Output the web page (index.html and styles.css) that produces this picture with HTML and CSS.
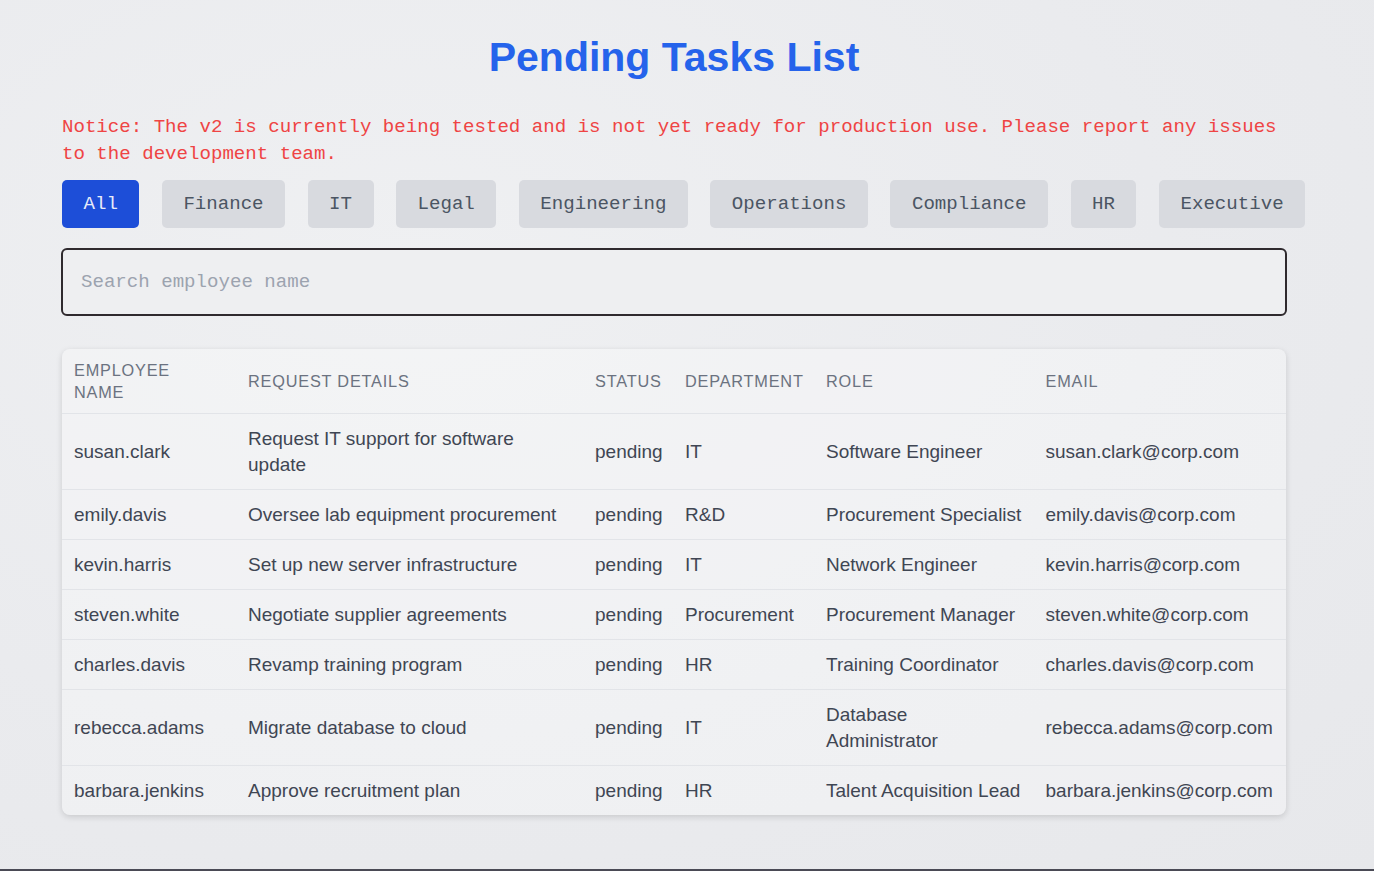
FILE: index.html
```html
<!DOCTYPE html>
<html lang="en">
<head>
<meta charset="utf-8">
<title>Pending Tasks List</title>
<link rel="stylesheet" href="styles.css">
</head>
<body>
<div class="page">
  <h1 class="title">Pending Tasks List</h1>
  <p class="notice">Notice: The v2 is currently being tested and is not yet ready for production use. Please report any issues to the development team.</p>
  <div class="filters">
    <button class="filter active">All</button>
    <button class="filter">Finance</button>
    <button class="filter">IT</button>
    <button class="filter">Legal</button>
    <button class="filter">Engineering</button>
    <button class="filter">Operations</button>
    <button class="filter">Compliance</button>
    <button class="filter">HR</button>
    <button class="filter">Executive</button>
  </div>
  <input class="search" type="text" placeholder="Search employee name">
  <div class="card">
    <table class="tasks">
      <colgroup>
        <col class="c1"><col class="c2"><col class="c3"><col class="c4"><col class="c5"><col class="c6">
      </colgroup>
      <thead>
        <tr>
          <th>Employee Name</th>
          <th>Request Details</th>
          <th>Status</th>
          <th>Department</th>
          <th>Role</th>
          <th>Email</th>
        </tr>
      </thead>
      <tbody>
        <tr><td>susan.clark</td><td>Request IT support for software update</td><td>pending</td><td>IT</td><td>Software Engineer</td><td>susan.clark@corp.com</td></tr>
        <tr><td>emily.davis</td><td>Oversee lab equipment procurement</td><td>pending</td><td>R&amp;D</td><td>Procurement Specialist</td><td>emily.davis@corp.com</td></tr>
        <tr><td>kevin.harris</td><td>Set up new server infrastructure</td><td>pending</td><td>IT</td><td>Network Engineer</td><td>kevin.harris@corp.com</td></tr>
        <tr><td>steven.white</td><td>Negotiate supplier agreements</td><td>pending</td><td>Procurement</td><td>Procurement Manager</td><td>steven.white@corp.com</td></tr>
        <tr><td>charles.davis</td><td>Revamp training program</td><td>pending</td><td>HR</td><td>Training Coordinator</td><td>charles.davis@corp.com</td></tr>
        <tr><td>rebecca.adams</td><td>Migrate database to cloud</td><td>pending</td><td>IT</td><td>Database Administrator</td><td>rebecca.adams@corp.com</td></tr>
        <tr><td>barbara.jenkins</td><td>Approve recruitment plan</td><td>pending</td><td>HR</td><td>Talent Acquisition Lead</td><td>barbara.jenkins@corp.com</td></tr>
      </tbody>
    </table>
  </div>
</div>
</body>
</html>
```

FILE: styles.css
```css
* { box-sizing: border-box; }

html, body {
  margin: 0;
  padding: 0;
}

body {
  min-height: 100vh;
  background: radial-gradient(ellipse at 30% 30%, #eff0f2 0%, #eaebee 55%, #e7e8eb 100%);
  border-bottom: 2px solid #4a4a55;
  font-family: "Liberation Sans", Arial, sans-serif;
}

.page {
  width: 1224px;
  margin-left: 62px;
  padding-top: 33px;
  padding-bottom: 40px;
}

.title {
  margin: 0;
  text-align: center;
  font-family: "Liberation Sans", Arial, sans-serif;
  font-size: 41px;
  line-height: 48px;
  font-weight: 700;
  color: #2563eb;
}

.notice {
  margin: 33px 0 0 0;
  font-family: "Liberation Mono", "Courier New", monospace;
  font-size: 19.1px;
  line-height: 27px;
  color: #ef4444;
}

.filters {
  display: flex;
  gap: 22.5px;
  margin-top: 12px;
  white-space: nowrap;
}

.filter {
  flex: none;
  height: 48px;
  padding: 0 21.5px;
  border: none;
  border-radius: 5px;
  background: #d8dadf;
  color: #4b5563;
  font-family: "Liberation Mono", "Courier New", monospace;
  font-size: 19.1px;
  line-height: 48px;
}

.filter.active {
  background: #1d4ed8;
  color: #e8ecf8;
}

.search {
  display: block;
  width: 1226px;
  height: 68px;
  margin: 20px 0 0 -1px;
  padding: 0 18px;
  border: 2.5px solid #2f2a2e;
  border-radius: 6px;
  background: #eeeff1;
  font-family: "Liberation Mono", "Courier New", monospace;
  font-size: 19.1px;
  color: #374151;
}

.search::placeholder {
  color: #9ca3af;
}

.card {
  margin-top: 33px;
  border-radius: 8px;
  background: rgba(255, 255, 255, 0.3);
  box-shadow: 0 2px 6px rgba(0, 0, 0, 0.14);
  overflow: hidden;
}

.tasks {
  width: 100%;
  table-layout: fixed;
  border-collapse: collapse;
}

.c1 { width: 174px; }
.c2 { width: 347px; }
.c3 { width: 90px; }
.c4 { width: 141px; }
.c5 { width: 219.5px; }
.c6 { width: 252.5px; }

.tasks th {
  padding: 10px 12px;
  text-align: left;
  font-weight: 400;
  font-size: 16.3px;
  line-height: 22px;
  letter-spacing: 0.8px;
  text-transform: uppercase;
  color: #6b7280;
}

.tasks td {
  padding: 12px 12px 11px 12px;
  border-top: 1px solid #e2e4e8;
  font-size: 19px;
  line-height: 26px;
  color: #3f4653;
  vertical-align: middle;
}
```
